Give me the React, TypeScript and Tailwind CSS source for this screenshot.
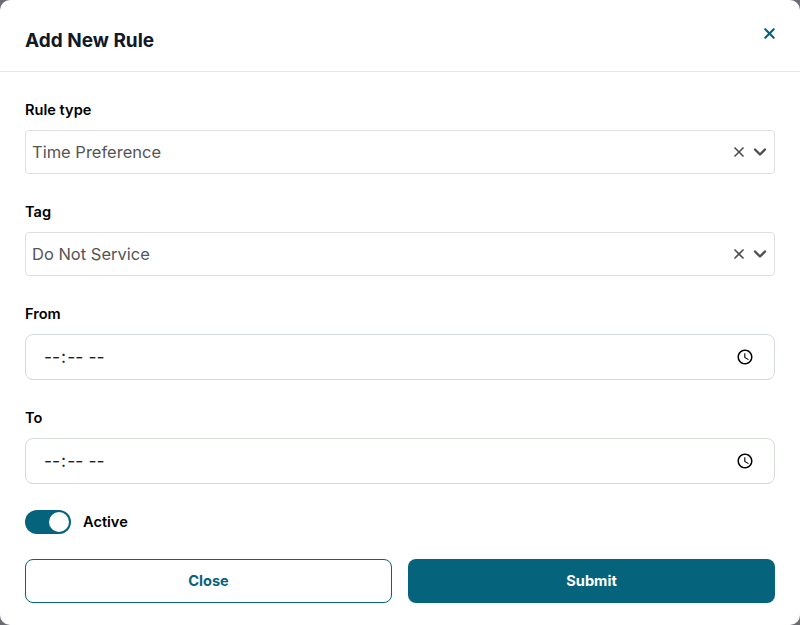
import { X, ChevronDown } from "lucide-react";

function SelectField({ label, value }: { label: string; value: string }) {
  return (
    <div className="flex flex-col">
      <label className="text-[14.6px] font-semibold leading-5 text-black mb-[10px]">{label}</label>
      <div className="h-11 flex items-center justify-between border border-[#dcdfe4] rounded pl-[6px] pr-[4px] bg-white">
        <span className="text-[16.5px] text-[#555555]">{value}</span>
        <div className="flex items-center gap-[3px] text-[#4d4d4d]">
          <X size={16} strokeWidth={2.5} />
          <ChevronDown size={20} strokeWidth={2.8} />
        </div>
      </div>
    </div>
  );
}

function TimeField({ label }: { label: string }) {
  return (
    <div className="flex flex-col">
      <label className="text-[14.6px] font-semibold leading-5 text-black mb-[10px]">{label}</label>
      <input
        type="time"
        className="h-[46px] w-full border border-[#d5d9e2] rounded-lg px-[17px] text-[17.5px] text-[#1f1f1f] bg-white"
      />
    </div>
  );
}

export default function App() {
  return (
    <div className="h-[625px] w-[800px] bg-[#6b6b76] font-['Inter',sans-serif]">
      <div className="h-full bg-white rounded-[10px] flex flex-col">
        <header className="h-[72px] shrink-0 flex justify-between border-b border-[#e5e7eb] pl-[25px] pr-[22px]">
          <h2 className="text-[19px] font-bold text-[#111827] mt-[29px] leading-6">Add New Rule</h2>
          <X size={17} strokeWidth={3} className="text-[#05637c] mt-[25px]" />
        </header>
        <div className="flex flex-col gap-7 px-[25px] pt-[28px]">
          <SelectField label="Rule type" value="Time Preference" />
          <SelectField label="Tag" value="Do Not Service" />
          <TimeField label="From" />
          <TimeField label="To" />
        </div>
        <div className="flex items-center gap-3 px-[25px] mt-[26px]">
          <div className="h-6 w-[46px] rounded-full bg-[#05637c] flex items-center justify-end pr-[2px]">
            <div className="h-5 w-5 rounded-full bg-white" />
          </div>
          <span className="text-[14.6px] font-semibold text-black pt-[2px]">Active</span>
        </div>
        <div className="flex justify-between px-[25px] mt-[25px]">
          <button className="w-[367px] h-11 pt-[2px] rounded-lg border border-[#05637c] bg-white text-[14.6px] font-bold text-[#05637c]">
            Close
          </button>
          <button className="w-[367px] h-11 pt-[2px] rounded-lg bg-[#05637c] text-[14.6px] font-bold text-white">
            Submit
          </button>
        </div>
      </div>
    </div>
  );
}
